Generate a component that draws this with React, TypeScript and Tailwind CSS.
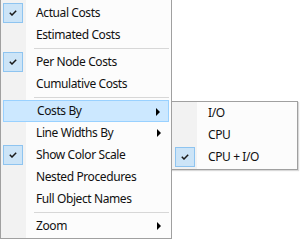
import React from 'react';

type Item =
  | { kind: 'sep' }
  | { kind: 'item'; label: string; checked?: boolean; sub?: boolean; hot?: boolean };

const MAIN_ITEMS: Item[] = [
  { kind: 'item', label: 'Actual Costs', checked: true },
  { kind: 'item', label: 'Estimated Costs' },
  { kind: 'sep' },
  { kind: 'item', label: 'Per Node Costs', checked: true },
  { kind: 'item', label: 'Cumulative Costs' },
  { kind: 'sep' },
  { kind: 'item', label: 'Costs By', sub: true, hot: true },
  { kind: 'item', label: 'Line Widths By', sub: true },
  { kind: 'item', label: 'Show Color Scale', checked: true },
  { kind: 'item', label: 'Nested Procedures' },
  { kind: 'item', label: 'Full Object Names' },
  { kind: 'sep' },
  { kind: 'item', label: 'Zoom', sub: true },
];

const SUB_ITEMS: Item[] = [
  { kind: 'item', label: 'I/O' },
  { kind: 'item', label: 'CPU' },
  { kind: 'item', label: 'CPU + I/O', checked: true },
];

const CheckBox = () => (
  <div className="absolute left-0 top-[1px] w-[20px] h-[20px] bg-[#cce4f7] border border-[#8ec4f0] flex items-center justify-center">
    <svg width="8" height="6" viewBox="0 0 8 6">
      <path d="M0.8 2.8 L3 5 L7.2 0.8" fill="none" stroke="#1a1a1a" strokeWidth="1.5" />
    </svg>
  </div>
);

const Arrow = () => (
  <svg width="4" height="8" viewBox="0 0 4 8" className="absolute right-[8px] top-[7px]">
    <path d="M0 0 L4 4 L0 8 Z" fill="#000" />
  </svg>
);

const MenuRow: React.FC<{ item: Item }> = ({ item }) => {
  if (item.kind === 'sep') {
    return (
      <div className="h-[5px] flex items-center pl-[31px]">
        <div className="h-px w-full bg-[#d7d7d7]" />
      </div>
    );
  }
  return (
    <div
      className={
        'relative h-[22px] flex items-center pl-[33px] text-[#111] ' +
        (item.hot ? 'bg-[#cce8ff] border border-[#99d1ff] pl-[32px]' : '')
      }
    >
      {item.checked && <CheckBox />}
      <span className="leading-none tracking-[-0.4px]">{item.label}</span>
      {item.sub && <Arrow />}
    </div>
  );
};

export default function App() {
  return (
    <div
      className="flex w-[300px] h-[240px] bg-white overflow-hidden text-[12px]"
      style={{ fontFamily: '"Segoe UI", "Noto Sans", sans-serif' }}
    >
      {/* Main menu */}
      <div className="w-[172px] h-[239px] shrink-0 border-l border-r border-b border-[#a0a0a0] bg-[linear-gradient(to_right,#f2f2f2_25px,#fcfcfc_25px)] pt-[2px] pl-[2px] pr-[2px]">
        {MAIN_ITEMS.map((item, i) => (
          <MenuRow key={i} item={item} />
        ))}
      </div>

      {/* Submenu */}
      <div className="ml-[-1px] mt-[101px] w-[127px] h-[69px] shrink-0 border border-[#a0a0a0] bg-[linear-gradient(to_right,#f2f2f2_25px,#fcfcfc_25px)] pl-[3px] pr-[2px] shadow-[1px_1px_1px_rgba(0,0,0,0.15)]">
        {SUB_ITEMS.map((item, i) => (
          <MenuRow key={i} item={item} />
        ))}
      </div>
    </div>
  );
}
